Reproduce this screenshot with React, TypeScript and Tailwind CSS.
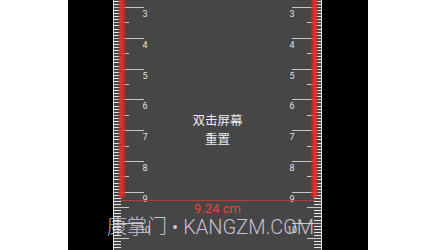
import React from "react";

const PX_CM = 30.8;
const cmY = (n: number) => 7 + (n - 3) * PX_CM;
const OFF = 68;

function Ruler() {
  const ticks: React.ReactNode[] = [];
  for (let i = 10; i <= 115; i++) {
    const y = cmY(0) + i * (PX_CM / 10);
    if (y < -2 || y > 252) continue;
    const isCm = i % 10 === 0;
    const isHalf = i % 5 === 0 && !isCm;
    const lenL = isCm ? 31 : isHalf ? 16 : 8;
    const lenR = isCm ? 30 : isHalf ? 15 : 8;
    const lx = 113 - OFF;
    const rx = 322 - OFF;
    const col = isCm || isHalf ? "#c8c8c8" : "#e6e6e6";
    const yy = Math.round(y) + 0.5;
    ticks.push(
      <line key={"l" + i} x1={lx} x2={lx + lenL} y1={yy} y2={yy} stroke={col} strokeWidth={1} />,
      <line key={"r" + i} x1={rx - lenR} x2={rx} y1={yy} y2={yy} stroke={col} strokeWidth={1} />
    );
    if (isCm) {
      const n = i / 10;
      ticks.push(
        <text key={"tl" + i} x={145 - OFF} y={yy + 9.5} fontSize={9} fill="#e0e0e0" textAnchor="middle" fontFamily="Roboto, 'Liberation Sans', sans-serif">{n}</text>,
        <text key={"tr" + i} x={292 - OFF} y={yy + 9.5} fontSize={9} fill="#e0e0e0" textAnchor="middle" fontFamily="Roboto, 'Liberation Sans', sans-serif">{n}</text>
      );
    }
  }
  return (
    <svg className="absolute inset-0 pointer-events-none" width={300} height={250} viewBox="0 0 300 250">
      <defs>
        <linearGradient id="red" x1="0" x2="1" y1="0" y2="0">
          <stop offset="0" stopColor="#c62222" stopOpacity="0.6" />
          <stop offset="0.5" stopColor="#f02c28" stopOpacity="0.95" />
          <stop offset="1" stopColor="#c62222" stopOpacity="0.6" />
        </linearGradient>
      </defs>
      {ticks}
      <rect x={118.5 - OFF} y={-10} width={7} height={208} rx={3.5} fill="url(#red)" />
      <rect x={311 - OFF} y={-10} width={7} height={208} rx={3.5} fill="url(#red)" />
      <line x1={120 - OFF} x2={316 - OFF} y1={200.5} y2={200.5} stroke="#b2403a" strokeWidth={1} />
    </svg>
  );
}

export default function App() {
  return (
    <div className="relative flex w-[427px] h-[250px] overflow-hidden bg-white font-['Roboto','Noto_Sans_CJK_SC',sans-serif]">
      <div className="w-[68px] shrink-0" />
      <div className="relative flex w-[300px] h-full shrink-0 bg-black">
        <div className="w-[45px] shrink-0" />
        <div className="flex w-[209px] h-full flex-col items-center border-x border-[#dcdcdc] bg-[#464646] pt-[110px]">
          <div className="text-[12.5px] leading-[19px] text-[#ececec] font-['Noto_Sans_CJK_SC',sans-serif]">双击屏幕</div>
          <div className="text-[12.5px] leading-[19px] text-[#ececec] font-['Noto_Sans_CJK_SC',sans-serif]">重置</div>
          <div className="mt-[53px] text-[13px] leading-[16px] text-[#de4a40] font-['Roboto',sans-serif]">9.24 cm</div>
        </div>
        <Ruler />
      </div>
      <div className="absolute left-[107px] top-[214px] whitespace-nowrap text-[20px] leading-[26px] font-light text-[rgba(226,216,236,0.85)] font-['Roboto','Noto_Sans_CJK_SC',sans-serif]">
        康掌门 • KANGZM.COM
      </div>
    </div>
  );
}
